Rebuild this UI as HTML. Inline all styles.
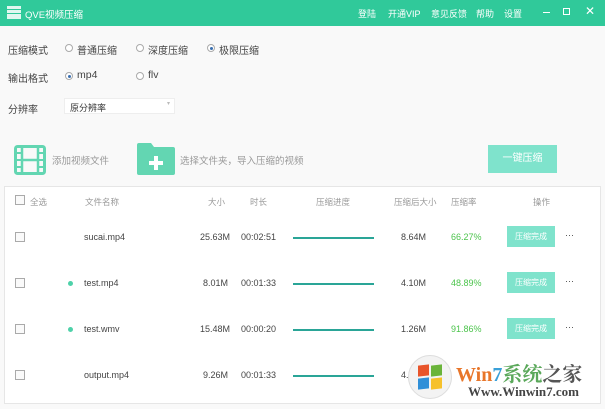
<!DOCTYPE html>
<html><head><meta charset="utf-8"><style>
*{margin:0;padding:0;box-sizing:border-box}
body{width:605px;height:409px;overflow:hidden;background:#f9f9f9;font-family:"Liberation Sans","Noto Sans CJK SC",sans-serif;font-size:9px;color:#444;position:relative}
.a{position:absolute;white-space:nowrap}
.hdr{position:absolute;left:0;top:0;width:605px;height:26px;background:#30c99a;color:#fff}
.radio{position:absolute;width:8px;height:8px;border:1px solid #aaa;border-radius:50%;background:#fff}
.radio.on::after{content:"";position:absolute;left:1.5px;top:1.5px;width:3px;height:3px;border-radius:50%;background:#3a6fb0}
.tbl{position:absolute;left:4px;top:186px;width:597px;height:218px;background:#fff;border:1px solid #e6e6e6}
.cb{position:absolute;width:10px;height:10px;border:1px solid #aaa;background:#fafafa}
.bar{position:absolute;left:293px;width:81px;height:2px;background:#2aa597}
.btn{position:absolute;left:507px;width:48px;height:21px;background:#7fe3cc;color:#fff;font-size:8px;text-align:center;line-height:21px}
.pct{color:#4cc44c}
.dot{position:absolute;left:68px;width:5px;height:5px;border-radius:50%;background:#4ed1a9}
.h{color:#999;font-size:8.5px}
</style></head><body>
<div class="hdr">
 <div class="a" style="left:7px;top:6px;width:14px;height:13px;background:#fff;opacity:.85"></div>
 <div class="a" style="left:7px;top:9px;width:14px;height:1px;background:#30c99a"></div>
 <div class="a" style="left:7px;top:13px;width:14px;height:1px;background:#30c99a"></div>
 <div class="a" style="left:25px;top:7px;font-size:9.5px">QVE视频压缩</div>
 <div class="a" style="left:358px;top:7px">登陆</div>
 <div class="a" style="left:388px;top:7px">开通VIP</div>
 <div class="a" style="left:431px;top:7px">意见反馈</div>
 <div class="a" style="left:476px;top:7px">帮助</div>
 <div class="a" style="left:504px;top:7px">设置</div>
 <div class="a" style="left:543px;top:12px;width:7px;height:1px;background:#fff"></div>
 <div class="a" style="left:563px;top:8px;width:7px;height:7px;border:1px solid #fff"></div>
 <div class="a" style="left:585px;top:4px;font-size:12px">✕</div>
</div>
<div class="a" style="left:8px;top:42px;font-size:10px">压缩模式</div>
<div class="radio" style="left:65px;top:44px"></div><div class="a" style="left:77px;top:42px;font-size:10px">普通压缩</div>
<div class="radio" style="left:136px;top:44px"></div><div class="a" style="left:148px;top:42px;font-size:10px">深度压缩</div>
<div class="radio on" style="left:207px;top:44px"></div><div class="a" style="left:219px;top:42px;font-size:10px">极限压缩</div>
<div class="a" style="left:8px;top:70px;font-size:10px">输出格式</div>
<div class="radio on" style="left:65px;top:72px"></div><div class="a" style="left:77px;top:69px;font-size:10.5px">mp4</div>
<div class="radio" style="left:136px;top:72px"></div><div class="a" style="left:148px;top:69px;font-size:10.5px">flv</div>
<div class="a" style="left:8px;top:101px;font-size:10px">分辨率</div>
<div class="a" style="left:64px;top:98px;width:111px;height:16px;background:#fff;border:1px solid #eee"></div>
<div class="a" style="left:70px;top:101px;font-size:9px;color:#333">原分辨率</div>
<div class="a" style="left:167px;top:100px;font-size:6px;color:#bbb">▾</div>
<svg class="a" style="left:14px;top:145px" width="32" height="30"><rect x="1.5" y="1.5" width="29" height="27" rx="2" fill="none" stroke="#63d6b2" stroke-width="3"/><rect x="8" y="1" width="16" height="28" fill="none" stroke="#63d6b2" stroke-width="2.5"/><line x1="8" y1="15" x2="24" y2="15" stroke="#63d6b2" stroke-width="2.5"/><line x1="1" y1="8" x2="8" y2="8" stroke="#63d6b2" stroke-width="2"/><line x1="1" y1="15" x2="8" y2="15" stroke="#63d6b2" stroke-width="2"/><line x1="1" y1="22" x2="8" y2="22" stroke="#63d6b2" stroke-width="2"/><line x1="24" y1="8" x2="31" y2="8" stroke="#63d6b2" stroke-width="2"/><line x1="24" y1="15" x2="31" y2="15" stroke="#63d6b2" stroke-width="2"/><line x1="24" y1="22" x2="31" y2="22" stroke="#63d6b2" stroke-width="2"/></svg>
<div class="a" style="left:52px;top:153px;font-size:9.5px;color:#999">添加视频文件</div>
<svg class="a" style="left:137px;top:143px" width="38" height="32"><path d="M2 0h12l3 4h19a2 2 0 0 1 2 2v24a2 2 0 0 1-2 2H2a2 2 0 0 1-2-2V2a2 2 0 0 1 2-2z" fill="#63d6b2"/><rect x="17" y="13" width="4" height="14" fill="#fff"/><rect x="12" y="18" width="14" height="4" fill="#fff"/></svg>
<div class="a" style="left:180px;top:153px;font-size:9.5px;color:#999">选择文件夹，导入压缩的视频</div>
<div class="a" style="left:488px;top:145px;width:69px;height:28px;background:#7fe3cc;color:#fff;font-size:10px;text-align:center;line-height:28px">一键压缩</div>
<div class="tbl"></div>
<div class="cb" style="left:15px;top:195px"></div>
<div class="a h" style="left:30px;top:196px">全选</div>
<div class="a h" style="left:85px;top:196px">文件名称</div>
<div class="a h" style="left:208px;top:196px">大小</div>
<div class="a h" style="left:250px;top:196px">时长</div>
<div class="a h" style="left:316px;top:196px">压缩进度</div>
<div class="a h" style="left:394px;top:196px">压缩后大小</div>
<div class="a h" style="left:451px;top:196px">压缩率</div>
<div class="a h" style="left:533px;top:196px">操作</div>

<div class="cb" style="left:15px;top:232px"></div>
<div class="a" style="left:84px;top:232px">sucai.mp4</div>
<div class="a" style="left:200px;top:232px">25.63M</div>
<div class="a" style="left:241px;top:232px">00:02:51</div>
<div class="bar" style="top:237px"></div>
<div class="a" style="left:401px;top:232px">8.64M</div>
<div class="a pct" style="left:451px;top:232px">66.27%</div>
<div class="btn" style="top:226px">压缩完成</div>
<div class="a" style="left:565px;top:230px">···</div>

<div class="cb" style="left:15px;top:278px"></div>
<div class="dot" style="top:281px"></div>
<div class="a" style="left:84px;top:278px">test.mp4</div>
<div class="a" style="left:203px;top:278px">8.01M</div>
<div class="a" style="left:241px;top:278px">00:01:33</div>
<div class="bar" style="top:283px"></div>
<div class="a" style="left:401px;top:278px">4.10M</div>
<div class="a pct" style="left:451px;top:278px">48.89%</div>
<div class="btn" style="top:272px">压缩完成</div>
<div class="a" style="left:565px;top:276px">···</div>

<div class="cb" style="left:15px;top:324px"></div>
<div class="dot" style="top:327px"></div>
<div class="a" style="left:84px;top:324px">test.wmv</div>
<div class="a" style="left:200px;top:324px">15.48M</div>
<div class="a" style="left:241px;top:324px">00:00:20</div>
<div class="bar" style="top:329px"></div>
<div class="a" style="left:401px;top:324px">1.26M</div>
<div class="a pct" style="left:451px;top:324px">91.86%</div>
<div class="btn" style="top:318px">压缩完成</div>
<div class="a" style="left:565px;top:322px">···</div>

<div class="cb" style="left:15px;top:370px"></div>
<div class="a" style="left:84px;top:370px">output.mp4</div>
<div class="a" style="left:203px;top:370px">9.26M</div>
<div class="a" style="left:241px;top:370px">00:01:33</div>
<div class="bar" style="top:375px"></div>
<div class="a" style="left:401px;top:370px">4.20M</div>

<div class="a" style="left:408px;top:355px;width:44px;height:44px;border-radius:50%;background:#f3f3f3;border:1px solid #ddd"></div>
<div class="a" style="left:418px;top:365px;width:11px;height:11px;background:#e8542a;transform:skewY(-6deg)"></div>
<div class="a" style="left:431px;top:365px;width:11px;height:11px;background:#6ab43a;transform:skewY(-6deg)"></div>
<div class="a" style="left:418px;top:378px;width:11px;height:11px;background:#2f8fd8;transform:skewY(-6deg)"></div>
<div class="a" style="left:431px;top:378px;width:11px;height:11px;background:#f6c12b;transform:skewY(-6deg)"></div>
<div class="a" style="left:456px;top:358px;font-size:20px;font-weight:bold;font-family:'Liberation Serif','Noto Serif CJK SC',serif;color:#e8762a">Win<span style="color:#3aa0d8">7</span><span style="color:#5aa85a">系统</span><span style="color:#555">之家</span></div>
<div class="a" style="left:468px;top:384px;font-size:13px;font-weight:bold;font-family:'Liberation Serif',serif;color:#444">Www.Winwin7.com</div>
</body></html>
